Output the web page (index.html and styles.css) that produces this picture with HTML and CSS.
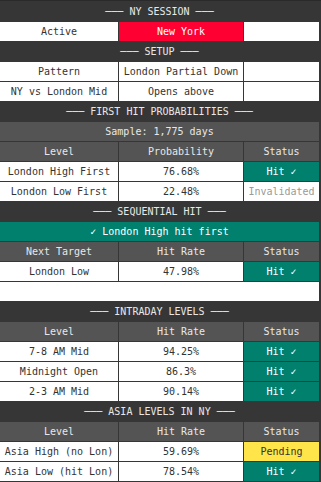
FILE: index.html
```html
<!DOCTYPE html>
<html>
<head>
<meta charset="utf-8">
<link rel="stylesheet" href="styles.css">
</head>
<body>
<div class="board">
  <div class="sec">─── NY SESSION ───</div>
  <div class="cell">Active</div>
  <div class="cell red">New York</div>
  <div class="cell"></div>

  <div class="sec">─── SETUP ───</div>
  <div class="cell">Pattern</div>
  <div class="cell">London Partial Down</div>
  <div class="cell"></div>
  <div class="cell">NY vs London Mid</div>
  <div class="cell">Opens above</div>
  <div class="cell"></div>

  <div class="sec">─── FIRST HIT PROBABILITIES ───</div>
  <div class="sub">Sample: 1,775 days</div>
  <div class="head">Level</div>
  <div class="head">Probability</div>
  <div class="head">Status</div>
  <div class="cell">London High First</div>
  <div class="cell">76.68%</div>
  <div class="cell hit">Hit ✓</div>
  <div class="cell">London Low First</div>
  <div class="cell">22.48%</div>
  <div class="cell invalid">Invalidated</div>

  <div class="sec">─── SEQUENTIAL HIT ───</div>
  <div class="banner">✓ London High hit first</div>
  <div class="head">Next Target</div>
  <div class="head">Hit Rate</div>
  <div class="head">Status</div>
  <div class="cell">London Low</div>
  <div class="cell">47.98%</div>
  <div class="cell hit">Hit ✓</div>
  <div class="blank"></div>

  <div class="sec">─── INTRADAY LEVELS ───</div>
  <div class="head">Level</div>
  <div class="head">Hit Rate</div>
  <div class="head">Status</div>
  <div class="cell">7-8 AM Mid</div>
  <div class="cell">94.25%</div>
  <div class="cell hit">Hit ✓</div>
  <div class="cell">Midnight Open</div>
  <div class="cell">86.3%</div>
  <div class="cell hit">Hit ✓</div>
  <div class="cell">2-3 AM Mid</div>
  <div class="cell">90.14%</div>
  <div class="cell hit">Hit ✓</div>

  <div class="sec">─── ASIA LEVELS IN NY ───</div>
  <div class="head">Level</div>
  <div class="head">Hit Rate</div>
  <div class="head">Status</div>
  <div class="cell">Asia High (no Lon)</div>
  <div class="cell">59.69%</div>
  <div class="cell pending">Pending</div>
  <div class="cell">Asia Low (hit Lon)</div>
  <div class="cell">78.54%</div>
  <div class="cell hit">Hit ✓</div>
</div>
</body>
</html>
```
FILE: styles.css
```css
html, body {
  margin: 0;
  padding: 0;
  background: #363636;
}
body {
  width: 321px;
  height: 482px;
  overflow: hidden;
  border-top: 1px solid #2a2a2a;
  box-sizing: border-box;
}
.board {
  display: grid;
  grid-template-columns: 118px 124px 75px;
  grid-auto-rows: 19px;
  gap: 1px;
  padding-top: 1px;
  font-family: "DejaVu Sans Mono", "Liberation Mono", monospace;
  font-size: 10px;
  color: #333333;
}
.board > div {
  display: flex;
  align-items: center;
  justify-content: center;
  white-space: nowrap;
  overflow: hidden;
}
.sec {
  grid-column: 1 / 4;
  background: #363636;
  color: #e8e8e8;
}
.sub {
  grid-column: 1 / 4;
  background: #545454;
  color: #e8e8e8;
}
.head {
  background: #545454;
  color: #e8e8e8;
}
.cell {
  background: #ffffff;
}
.red {
  background: #ff0033;
  color: #ffffff;
}
.hit {
  background: #00806d;
  color: #ffffff;
}
.pending {
  background: #ffe54a;
  color: #333333;
}
.invalid {
  color: #9a9a9a;
}
.banner {
  grid-column: 1 / 4;
  background: #00806d;
  color: #ffffff;
}
.blank {
  grid-column: 1 / 4;
  background: #ffffff;
}
```
